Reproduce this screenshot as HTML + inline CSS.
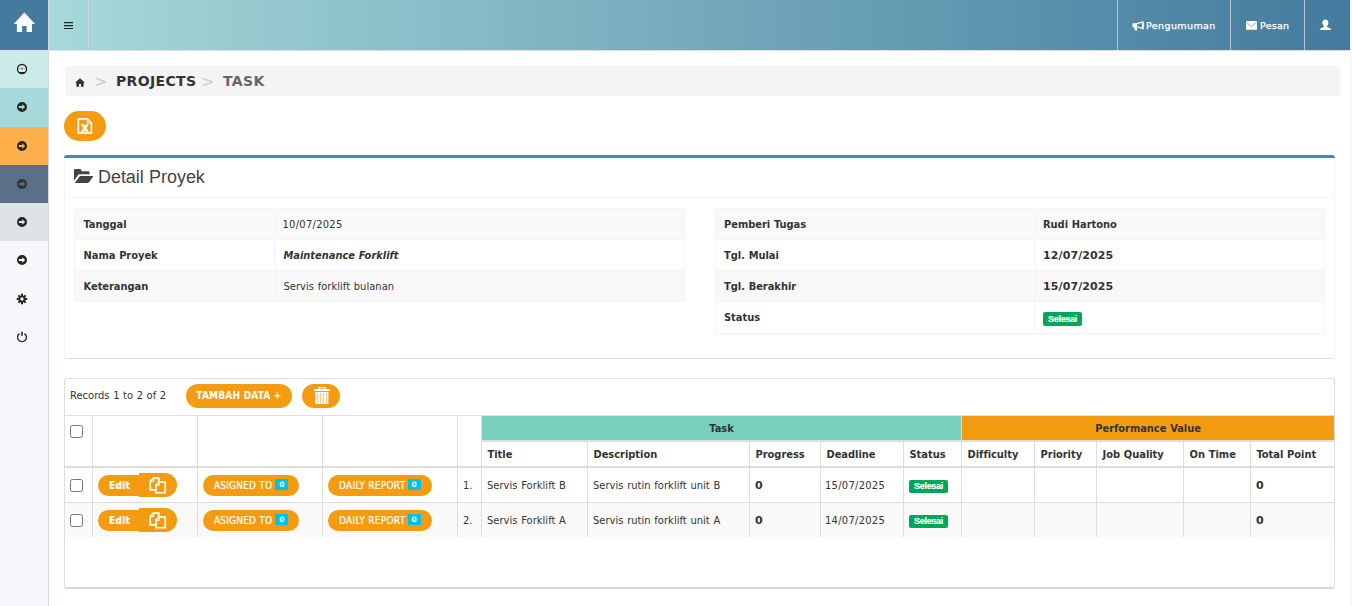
<!DOCTYPE html>
<html lang="id">
<head>
<meta charset="utf-8">
<title>Task</title>
<style>
*{box-sizing:border-box;margin:0;padding:0}
html,body{width:1352px;height:606px;overflow:hidden;background:#fff}
body{position:relative;font-family:"DejaVu Sans Condensed","DejaVu Sans","Liberation Sans",sans-serif;font-size:11px;color:#333;letter-spacing:.06px;word-spacing:.4px}
.abs{position:absolute}
b,.b,th{letter-spacing:-.03px}
#side{left:0;top:0;width:49px;height:606px;background:#f6f7fa;border-right:1px solid #d2d6de}
#side .it{position:absolute;left:0;width:48px}
#side svg{position:absolute}
#hdr{left:49px;top:0;width:1301px;height:50px;background:linear-gradient(90deg,#a6d9d9 0%,#437a9e 100%)}
#hline{left:0;top:50px;width:1350px;height:1px;background:#dcdfe8}
#rstrip{left:1350px;top:0;width:2px;height:606px;background:#f7f7f7}
.vd{position:absolute;top:0;width:1px;height:50px;background:#d2d6de;opacity:.8}
.nav{position:absolute;top:1px;height:50px;line-height:50px;color:#fff;font-family:"DejaVu Sans","Liberation Sans",sans-serif;font-size:9.5px;white-space:nowrap;letter-spacing:.25px;-webkit-text-stroke:.25px #fff}
#bc{left:65px;top:66px;width:1275px;height:30px;background:#f4f4f4;border-radius:4px}
#bc span{position:absolute;top:0;line-height:30px;font-family:"DejaVu Sans","Liberation Sans",sans-serif;font-weight:bold;font-size:14px;white-space:nowrap;letter-spacing:.35px}
.pill{position:absolute;background:#f39c12;border-radius:15px;color:#fff;font-weight:bold;white-space:nowrap;text-align:center;font-size:10px}
#panel{left:64px;top:156px;width:1271px;height:203px;border-bottom:1px solid #dcdcdc;border-left:1px solid #f3f3f3;border-right:1px solid #f3f3f3;border-radius:3px}
#ptop{left:64px;top:155px;width:1271px;height:3px;background:#3c8dbc;border-radius:3px 3px 0 0}
#ptitle{left:98px;top:166px;font-family:"Liberation Sans",sans-serif;font-size:18px;line-height:22px;color:#444;white-space:nowrap;letter-spacing:-.05px}
.hl{position:absolute;height:1px;background:#f4f4f4}
table{border-collapse:collapse;table-layout:fixed;position:absolute;font-size:11px}
.dt td{height:31px;border:1px solid #f3f3f3;padding:1px 8px 0 8.5px;vertical-align:middle;white-space:nowrap}
.dt tr:nth-child(odd) td{background:#f9f9f9}
.b{font-weight:bold}
.rt td{padding-left:8px}
.dt tr.last td{height:32px;padding-top:0}
.dte{letter-spacing:.3px;margin-left:-1px}
.wide{font-family:"DejaVu Sans","Liberation Sans",sans-serif;letter-spacing:.1px}
.lab{display:inline-block;background:#00a65a;color:#fff;font-family:"Liberation Sans",sans-serif;font-weight:bold;font-size:9px;line-height:14px;height:14px;width:39px;text-align:center;border-radius:2px;letter-spacing:-.32px;vertical-align:middle;-webkit-text-stroke:.15px #fff}
#box{left:64px;top:378px;width:1271px;height:211px;border:1px solid #ddd;border-bottom:2px solid #d8d8d8;border-radius:3px}
.gt{border-collapse:separate;border-spacing:0}
.gt td,.gt th{border-right:1px solid #ddd;padding:0 0 0 5px;vertical-align:middle;white-space:nowrap;text-align:left;overflow:hidden}
.gt td:last-child,.gt th:last-child{border-right:0}
.gt th{padding-left:5.5px;font-weight:bold;border-top:1px solid #ddd;border-bottom:2px solid #ddd;height:26px;color:#333}
.gt tr.h1 th{height:27px}
.gt tr.h2 th{border-top:0}
.gt tr.h1 th[rowspan]{height:53px;vertical-align:top}
.gt th.task{background:#76d0bc;text-align:center;padding:0}
.gt th.perf{background:#f39c12;text-align:center;padding:0}
.gt td{height:35px;border-bottom:1px solid #ddd}
.gt .lab{height:13px;line-height:13px;position:relative;top:1.5px}
.dt .lab{position:relative;top:1px}
.gt tr.r2 td{height:34px;border-bottom:0;background:#f9f9f9}
.cb{display:block;width:13px;height:13px;border:1px solid #767676;border-radius:2.5px;background:#fff}
.btn{display:inline-block;vertical-align:middle;background:#f39c12;color:#fff;font-size:10px;height:21px;line-height:22px;border-radius:10.5px;text-align:left;letter-spacing:.28px;word-spacing:0;-webkit-text-stroke:.2px #fff}
.bdg{display:inline-block;vertical-align:top;margin-top:4px;margin-left:0;font-family:"DejaVu Sans","Liberation Sans",sans-serif;letter-spacing:0;-webkit-text-stroke:0;width:13px;height:11px;line-height:11.500px;background:#00c0ef;color:#fff;font-size:7.500px;font-weight:bold;text-align:center;border-radius:1px}
</style>
</head>
<body>
<div id="side" class="abs">
  <div class="it" style="top:0;height:50px;background:#437a9e"></div>
  <div class="it" style="top:50px;height:38px;background:#cbebe8"></div>
  <div class="it" style="top:88px;height:39px;background:#a6d9d9"></div>
  <div class="it" style="top:127px;height:38px;background:#ffb04a"></div>
  <div class="it" style="top:165px;height:38px;background:#5b6f86"></div>
  <div class="it" style="top:203px;height:38px;background:#dfe2e7"></div>
  <svg style="left:13px;top:12px" width="23" height="21" viewBox="0 0 23 21"><path fill="#fff" d="M11.350.600L22.100 11.900H19V20H13.600V14H9.100V20H3.900V11.900H.6Z"/></svg>
  <svg style="left:16px;top:63px" width="12" height="12" viewBox="-6 -6 12 12"><circle r="4.5" fill="#daf0ed" stroke="#222" stroke-width="1.4"/><path fill="#222" d="M-3.2 3.1h6.4L2 4.6h-4Z"/><path stroke="#8a8f95" stroke-width=".9" stroke-dasharray=".9 .8" fill="none" d="M-2.8-.6h5.6"/><path stroke="#555" stroke-width="1" d="M0 .9V-1.5"/></svg>
  <svg style="left:16px;top:101px" width="12" height="12" viewBox="-6 -6 12 12"><path fill="#262626" fill-rule="evenodd" d="M0-5A5 5 0 1 1 0 5A5 5 0 1 1 0-5ZM-3.1-1h3.2v-1.7L3.2 0L.1 2.7V1h-3.2Z"/></svg>
  <svg style="left:16px;top:140px" width="12" height="12" viewBox="-6 -6 12 12"><path fill="#262626" fill-rule="evenodd" d="M0-5A5 5 0 1 1 0 5A5 5 0 1 1 0-5ZM-3.1-1h3.2v-1.7L3.2 0L.1 2.7V1h-3.2Z"/></svg>
  <svg style="left:16px;top:178px" width="12" height="12" viewBox="-6 -6 12 12"><path fill="#333" fill-rule="evenodd" d="M0-5A5 5 0 1 1 0 5A5 5 0 1 1 0-5ZM-3.1-1h3.2v-1.7L3.2 0L.1 2.7V1h-3.2Z"/></svg>
  <svg style="left:16px;top:216px" width="12" height="12" viewBox="-6 -6 12 12"><path fill="#262626" fill-rule="evenodd" d="M0-5A5 5 0 1 1 0 5A5 5 0 1 1 0-5ZM-3.1-1h3.2v-1.7L3.2 0L.1 2.7V1h-3.2Z"/></svg>
  <svg style="left:16px;top:254px" width="12" height="12" viewBox="-6 -6 12 12"><path fill="#262626" fill-rule="evenodd" d="M0-5A5 5 0 1 1 0 5A5 5 0 1 1 0-5ZM-3.1-1h3.2v-1.7L3.2 0L.1 2.7V1h-3.2Z"/></svg>
  <svg style="left:16px;top:293px" width="12" height="12" viewBox="-6 -6 12 12"><g fill="#222"><circle r="3.6"/><g id="tth"><rect x="-1" y="-5.3" width="2" height="10.6"/><rect x="-5.3" y="-1" width="10.6" height="2"/></g><g transform="rotate(45)"><rect x="-1" y="-5.1" width="2" height="10.2"/><rect x="-5.1" y="-1" width="10.2" height="2"/></g></g><circle r="1.7" fill="#f6f7fa"/></svg>
  <svg style="left:16px;top:331px" width="12" height="12" viewBox="-6 -6 12 12"><path fill="none" stroke="#222" stroke-width="1.3" d="M-2.5-3.4A4.4 4.4 0 1 0 2.5-3.4"/><path stroke="#222" stroke-width="1.6" d="M0-5.2V-1.3"/></svg>
</div>
<div id="hdr" class="abs">
  <div class="vd" style="left:39px"></div>
  <div class="vd" style="left:1068px"></div>
  <div class="vd" style="left:1181px"></div>
  <div class="vd" style="left:1255px"></div>

  <svg class="abs" style="left:15px;top:22px" width="9" height="8" viewBox="0 0 9 8"><path fill="#222" d="M0 0h9v1.200H0zM0 2.950h9v1.200H0zM0 5.900h9v1.200H0z"/></svg>
  <svg class="abs" style="left:1083px;top:20.600px" width="13" height="11" viewBox="0 0 13 11"><path fill="#fff" d="M.5 2.3h4.6v3.9h-.4l.7 3.4H3l-.9-3.4H.5Z"/><path fill="none" stroke="#fff" stroke-width="1.2" d="M5 2.7L10.9 1v6.6L5 5.8"/><path fill="#fff" d="M10.3.6h1.2v7.5h-1.2zM11.4 3.4h.7v1.8h-.7z"/></svg>
  <svg class="abs" style="left:1197px;top:21px" width="11" height="9" viewBox="0 0 11 9"><rect width="11" height="8.8" rx=".6" fill="#fff"/><path fill="none" stroke="#8fb0c6" stroke-width="1" d="M.4 1.300L5.500 5.500l5.100-4.200"/></svg>
  <svg class="abs" style="left:1270px;top:19px" width="13" height="12" viewBox="0 0 13 12"><path fill="#fff" d="M6.4.4c1.9 0 3 1.300 3 3.200 0 1.500-.6 2.900-1.500 3.600v.7c1.400.5 3.200 1.200 3.900 1.900.3.300.4.800.4 1.300H.7c0-.5.100-1 .4-1.300.7-.7 2.500-1.400 3.900-1.900v-.7C4 6.500 3.400 5.100 3.400 3.600c0-1.900 1.100-3.200 3-3.200Z"/></svg>
  <div class="nav" style="left:1097px;letter-spacing:.4px">Pengumuman</div>
  <div class="nav" style="left:1211px">Pesan</div>
</div>
<div id="hline" class="abs"></div>
<div id="rstrip" class="abs"></div>
<div id="bc" class="abs">
  <svg class="abs" style="left:10px;top:12px" width="10" height="9" viewBox="0 0 10 9"><path fill="#333" d="M5 .2L10 4.700H8.600V8.800H6V6H4v2.800H1.400V4.700H0Z"/></svg>
  <span style="left:29px;color:#ccc;font-weight:normal;font-size:16px;letter-spacing:0;top:.5px">&gt;</span>
  <span style="left:51px;color:#333">PROJECTS</span>
  <span style="left:136px;color:#ccc;font-weight:normal;font-size:16px;letter-spacing:0;top:.5px">&gt;</span>
  <span style="left:158px;color:#666">TASK</span>
</div>
<div class="pill" style="left:64px;top:111px;width:42px;height:30px"><svg class="abs" style="left:13px;top:7px" width="16" height="16" viewBox="0 0 16 16"><path fill="none" stroke="#fff" stroke-width="1.7" d="M1.350.950H10.300L14.400 5V15.150H1.350Z"/><path fill="none" stroke="#fff" stroke-width="1" d="M10.300 1.200V5h3.800"/><path fill="#fff" d="M3.900 6.200H7L7.900 8.300L8.800 6.200H11.900L9.500 10L11.900 13.900H8.800L7.900 11.700L7 13.900H3.900L6.300 10Z"/></svg></div>
<div id="panel" class="abs"></div>
<div id="ptop" class="abs"></div>
<svg class="abs" style="left:73px;top:168px" width="21" height="16" viewBox="0 0 21 16"><path fill="#444" d="M1 2.100Q1 .9 2.200.9H7Q8.100.9 8.300 2.100L8.500 3.300H15.200Q16.400 3.300 16.500 4.500L16.600 6.300H6.800Q5.600 6.300 4.900 7.300L1 12.700Z"/><path fill="#444" d="M6.900 8H19.800Q20.400 8 20 8.700L16.300 14.100Q15.800 14.900 14.800 14.900H1.800Z"/></svg>
<div id="ptitle" class="abs">Detail Proyek</div>
<div class="hl" style="left:65px;top:197px;width:1269px"></div>
<table class="dt" style="left:74px;top:208px;width:611px">
  <colgroup><col style="width:200px"><col></colgroup>
  <tr><td class="b">Tanggal</td><td><span class="dte">10/07/2025</span></td></tr>
  <tr><td class="b">Nama Proyek</td><td class="b"><i>Maintenance Forklift</i></td></tr>
  <tr><td class="b">Keterangan</td><td>Servis forklift bulanan</td></tr>
</table>
<table class="dt rt" style="left:715px;top:208px;width:610px">
  <colgroup><col style="width:319px"><col></colgroup>
  <tr><td class="b">Pemberi Tugas</td><td class="b">Rudi Hartono</td></tr>
  <tr><td class="b">Tgl. Mulai</td><td class="b wide">12/07/2025</td></tr>
  <tr><td class="b">Tgl. Berakhir</td><td class="b wide">15/07/2025</td></tr>
  <tr class="last"><td class="b">Status</td><td><span class="lab">Selesai</span></td></tr>
</table>
<div id="box" class="abs"></div>
<div class="abs" style="left:70px;top:389px;line-height:14px;white-space:nowrap;letter-spacing:.04px">Records 1 to 2 of 2</div>
<div class="pill" style="left:186px;top:384px;width:106px;height:24px;line-height:24px;border-radius:12px;letter-spacing:.22px;word-spacing:0">TAMBAH DATA +</div>
<div class="pill" style="left:302px;top:384px;width:38px;height:24px;border-radius:12px"><svg class="abs" style="left:11px;top:2px" width="18" height="19" viewBox="0 0 18 19"><path fill="#fff" d="M1 3h16v2.100H1zM2.400 5.900h13V17q0 1-1 1H3.400q-1 0-1-1Z"/><path fill="none" stroke="#fff" stroke-width="1.300" d="M5.900 3.200V1.700h6.300v1.500"/><path stroke="#f9cc80" stroke-width="1.200" d="M4.650 7v10M7.550 7v10M10.450 7v10M13.350 7v10"/></svg></div>
<table class="gt" style="left:65px;top:415px;width:1269px">
  <colgroup><col style="width:28px"><col style="width:105px"><col style="width:125px"><col style="width:135px"><col style="width:24px"><col style="width:106px"><col style="width:162px"><col style="width:71px"><col style="width:83px"><col style="width:58px"><col style="width:73px"><col style="width:62px"><col style="width:87px"><col style="width:67px"><col style="width:83px"></colgroup>
  <thead>
  <tr class="h1"><th rowspan="2" style="padding-top:9px;padding-left:5px"><span class="cb"></span></th><th rowspan="2"></th><th rowspan="2"></th><th rowspan="2"></th><th rowspan="2"></th><th colspan="5" class="task">Task</th><th colspan="5" class="perf">Performance Value</th></tr>
  <tr class="h2"><th>Title</th><th>Description</th><th>Progress</th><th>Deadline</th><th>Status</th><th>Difficulty</th><th>Priority</th><th>Job Quality</th><th>On Time</th><th>Total Point</th></tr>
  </thead>
  <tbody>
  <tr class="r1"><td><span class="cb"></span></td>
    <td><span class="btn b" style="width:41px;padding-left:11px;border-radius:10.5px 0 0 10.5px">Edit</span><span class="btn" style="position:relative;width:38px;height:24px;border-radius:0 12px 12px 0;margin-left:0"><svg style="position:absolute;left:10px;top:4px" width="18" height="17" viewBox="0 0 18 17"><path fill="none" stroke="#fff" stroke-width="1.700" d="M6.200 12.900H1.250V4.300L4.400 1.150H9.750V4.600"/><path fill="none" stroke="#fff" stroke-width="1" d="M4.700 1.400V4.600H1.500"/><path fill="#f39c12" stroke="#fff" stroke-width="1.700" d="M6.950 8.100L9.900 5.150H16.250V15.750H6.950Z"/><path fill="none" stroke="#fff" stroke-width="1" d="M10.200 5.400V8.400H7.200"/></svg></span></td>
    <td><span class="btn" style="width:96px;padding-left:11px;letter-spacing:.2px">ASIGNED TO <span class="bdg">0</span></span></td>
    <td><span class="btn" style="width:104px;padding-left:11px">DAILY REPORT <span class="bdg" style="margin-left:-1px">0</span></span></td>
    <td>1.</td><td>Servis Forklift B</td><td>Servis rutin forklift unit B</td><td class="b wide">0</td><td><span class="dte">15/07/2025</span></td><td><span class="lab">Selesai</span></td><td></td><td></td><td></td><td></td><td class="b wide">0</td></tr>
  <tr class="r2"><td><span class="cb"></span></td>
    <td><span class="btn b" style="width:41px;padding-left:11px;border-radius:10.5px 0 0 10.5px">Edit</span><span class="btn" style="position:relative;width:38px;height:24px;border-radius:0 12px 12px 0;margin-left:0"><svg style="position:absolute;left:10px;top:4px" width="18" height="17" viewBox="0 0 18 17"><path fill="none" stroke="#fff" stroke-width="1.700" d="M6.200 12.900H1.250V4.300L4.400 1.150H9.750V4.600"/><path fill="none" stroke="#fff" stroke-width="1" d="M4.700 1.400V4.600H1.500"/><path fill="#f39c12" stroke="#fff" stroke-width="1.700" d="M6.950 8.100L9.900 5.150H16.250V15.750H6.950Z"/><path fill="none" stroke="#fff" stroke-width="1" d="M10.200 5.400V8.400H7.200"/></svg></span></td>
    <td><span class="btn" style="width:96px;padding-left:11px;letter-spacing:.2px">ASIGNED TO <span class="bdg">0</span></span></td>
    <td><span class="btn" style="width:104px;padding-left:11px">DAILY REPORT <span class="bdg" style="margin-left:-1px">0</span></span></td>
    <td>2.</td><td>Servis Forklift A</td><td>Servis rutin forklift unit A</td><td class="b wide">0</td><td><span class="dte">14/07/2025</span></td><td><span class="lab">Selesai</span></td><td></td><td></td><td></td><td></td><td class="b wide">0</td></tr>
  </tbody>
</table>
</body>
</html>
